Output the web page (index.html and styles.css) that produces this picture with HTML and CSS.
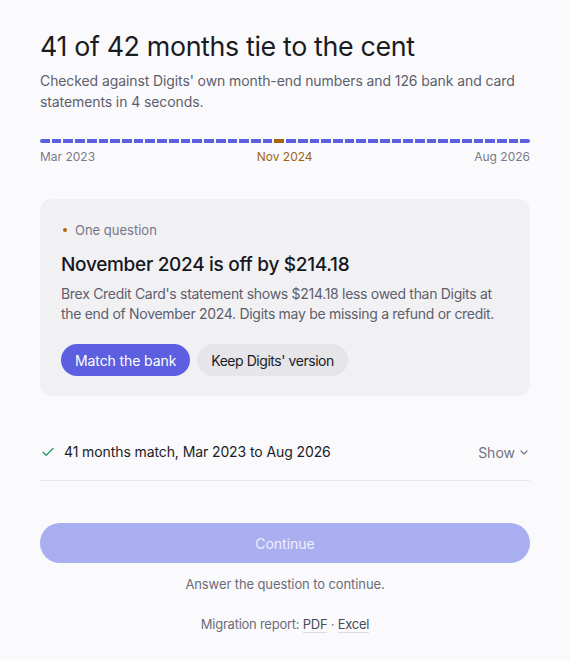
FILE: index.html
```html
<!DOCTYPE html>
<html>
<head>
<meta charset="utf-8">
<link rel="stylesheet" href="styles.css">
</head>
<body>
<main class="page">
  <h1 class="title">41 of 42 months tie to the cent</h1>
  <p class="subtitle">Checked against Digits' own month-end numbers and 126 bank and card statements in 4 seconds.</p>

  <div class="timeline" id="timeline"></div>
  <div class="timeline-labels">
    <span>Mar 2023</span>
    <span class="flag">Nov 2024</span>
    <span>Aug 2026</span>
  </div>

  <section class="card">
    <div class="eyebrow"><span class="dot"></span>One question</div>
    <h2 class="card-title">November 2024 is off by $214.18</h2>
    <p class="card-text">Brex Credit Card's statement shows $214.18 less owed than Digits at the end of November 2024. Digits may be missing a refund or credit.</p>
    <div class="actions">
      <button class="btn btn-primary">Match the bank</button>
      <button class="btn btn-secondary">Keep Digits' version</button>
    </div>
  </section>

  <div class="match-row">
    <svg class="check" width="12" height="10" viewBox="0 0 12 10"><path d="M1 5.2 L4.2 8.2 L11 1.5" fill="none" stroke="#2f9a6c" stroke-width="1.4" stroke-linecap="round" stroke-linejoin="round"/></svg>
    <span class="match-text">41 months match, Mar 2023 to Aug 2026</span>
    <span class="show">Show <svg width="8" height="5" viewBox="0 0 8 5"><path d="M1 1 L4 4 L7 1" fill="none" stroke="#7a7a88" stroke-width="1.2" stroke-linecap="round" stroke-linejoin="round"/></svg></span>
  </div>

  <button class="continue" disabled>Continue</button>
  <p class="hint">Answer the question to continue.</p>
  <p class="report">Migration report: <a href="#">PDF</a> · <a href="#">Excel</a></p>
</main>
<script>
  var t = document.getElementById('timeline');
  for (var i = 0; i < 42; i++) {
    var s = document.createElement('span');
    s.className = 'seg' + (i === 20 ? ' seg-off' : '');
    t.appendChild(s);
  }
</script>
</body>
</html>
```

FILE: styles.css
```css
* { box-sizing: border-box; }
html, body { margin: 0; padding: 0; }
body {
  background: #fafafd;
  font-family: Inter, "Noto Sans", sans-serif;
  color: #1c1c24;
  width: 570px;
}
.page {
  padding: 30px 40px 0 40px;
  display: flex;
  flex-direction: column;
}
.title {
  margin: 0;
  font-size: 26.8px;
  font-weight: 400;
  letter-spacing: -0.35px;
  line-height: 32px;
  color: #1b1b22;
}
.subtitle {
  margin: 8px 0 0 0;
  font-size: 14px;
  line-height: 21px;
  color: #5e5e6c;
  letter-spacing: -0.1px;
}
.timeline {
  display: flex;
  gap: 2px;
  margin-top: 27px;
  height: 4px;
}
.seg {
  flex: 1;
  height: 4px;
  background: #5b60df;
}
.seg:first-child { border-radius: 2px 0 0 2px; }
.seg:last-child { border-radius: 0 2px 2px 0; }
.seg-off { background: #a8640c; }
.timeline-labels {
  display: flex;
  justify-content: space-between;
  margin-top: 6px;
  font-size: 12px;
  line-height: 16px;
  color: #7a7a88;
}
.timeline-labels .flag { color: #a0640e; }
.card {
  margin-top: 34px;
  background: #f1f1f4;
  border-radius: 12px;
  padding: 22px 21px 20px 21px;
}
.eyebrow {
  display: flex;
  align-items: center;
  font-size: 13px;
  line-height: 18px;
  color: #76768a;
}
.dot {
  width: 4px;
  height: 4px;
  border-radius: 50%;
  background: #b0680a;
  margin: 0 8px 0 2px;
}
.card-title {
  margin: 14px 0 0 0;
  font-size: 19px;
  font-weight: 450;
  line-height: 24px;
  letter-spacing: -0.3px;
  color: #17171e;
}
.card-text {
  margin: 7px 0 0 0;
  font-size: 14px;
  line-height: 20px;
  color: #5e5e6c;
  letter-spacing: -0.3px;
}
.actions {
  display: flex;
  gap: 7px;
  margin-top: 20px;
}
.btn {
  border: none;
  height: 32px;
  border-radius: 16px;
  padding: 0 14px;
  font-family: inherit;
  font-size: 14px;
  letter-spacing: -0.1px;
}
.btn-primary { background: #5b5fe0; color: #fff; }
.btn-secondary { background: #e5e5ea; color: #1c1c24; letter-spacing: -0.45px; }
.match-row {
  display: flex;
  align-items: center;
  margin-top: 46px;
  padding: 0 0 18px 0;
  border-bottom: 1px solid #e6e6ec;
}
.check { margin: 0 10px 0 2px; }
.match-text {
  flex: 1;
  font-size: 14px;
  line-height: 20px;
  color: #1c1c24;
  letter-spacing: -0.1px;
}
.show {
  display: flex;
  align-items: center;
  gap: 5px;
  font-size: 14px;
  color: #72727e;
  margin-right: 2px;
}
.continue {
  margin-top: 42px;
  height: 40px;
  border: none;
  border-radius: 20px;
  background: #a9aef0;
  color: #eef0fc;
  font-family: inherit;
  font-size: 14px;
}
.hint {
  margin: 12px 0 0 0;
  text-align: center;
  font-size: 13px;
  line-height: 18px;
  color: #6c6c78;
  letter-spacing: -0.1px;
}
.report {
  margin: 22px 0 0 0;
  text-align: center;
  font-size: 13px;
  line-height: 18px;
  color: #6c6c78;
  letter-spacing: -0.25px;
}
.report a {
  color: #4a4a58;
  text-decoration: none;
  border-bottom: 1px solid #dcdce4;
}
```
